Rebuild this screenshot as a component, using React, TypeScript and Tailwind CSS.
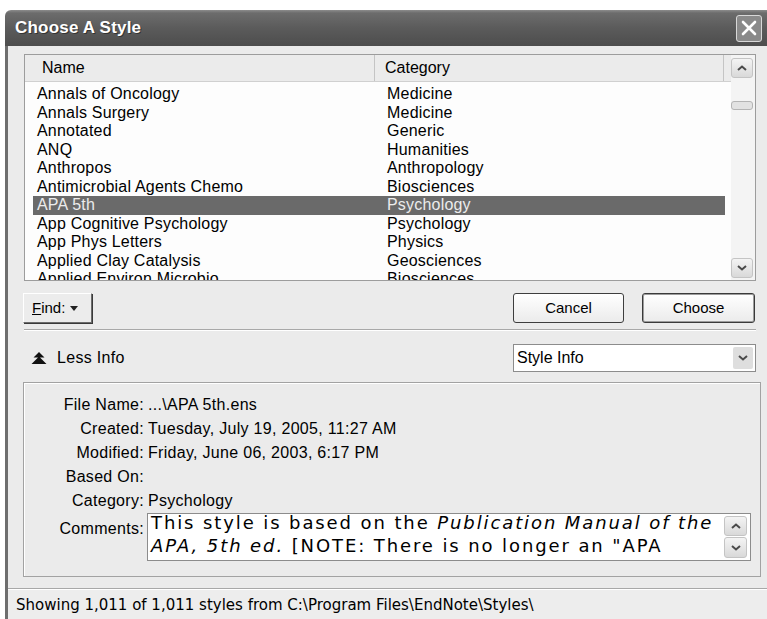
import React from 'react';

const styles: [string, string][] = [
	['Annals of Oncology', 'Medicine'],
	['Annals Surgery', 'Medicine'],
	['Annotated', 'Generic'],
	['ANQ', 'Humanities'],
	['Anthropos', 'Anthropology'],
	['Antimicrobial Agents Chemo', 'Biosciences'],
	['APA 5th', 'Psychology'],
	['App Cognitive Psychology', 'Psychology'],
	['App Phys Letters', 'Physics'],
	['Applied Clay Catalysis', 'Geosciences'],
	['Applied Environ Microbio', 'Biosciences'],
];

const selected = 'APA 5th';

const details: [string, string][] = [
	['File Name:', '...\\APA 5th.ens'],
	['Created:', 'Tuesday, July 19, 2005, 11:27 AM'],
	['Modified:', 'Friday, June 06, 2003, 6:17 PM'],
	['Based On:', ''],
	['Category:', 'Psychology'],
];

const Chevron = ({ up = false }: { up?: boolean }) => (
	<svg width="10" height="6" viewBox="0 0 10 6" className={up ? '' : 'rotate-180'}>
		<polyline points="1,5 5,1.5 9,5" fill="none" stroke="#4a4a4a" strokeWidth="2" />
	</svg>
);

const ScrollButton = ({ up = false, className = '' }: { up?: boolean; className?: string }) => (
	<div
		className={`flex items-center justify-center rounded-[3px] border border-[#c4c4c4] bg-[linear-gradient(to_bottom,#f4f4f4,#d9d9d9)] ${className}`}
	>
		<Chevron up={up} />
	</div>
);

const TitleBar = () => (
	<div className="flex h-[36px] items-center justify-between rounded-tl-[6px] bg-[linear-gradient(to_bottom,#8c8c8c_0px,#6c6c6c_3px,#5b5b5b_50%,#4d4d4d_100%)] pl-[10px] pr-[5px]">
		<span className="text-[17px] font-bold tracking-[0.2px] text-white [text-shadow:1px_1px_0_#333]">
			Choose A Style
		</span>
		<div className="flex h-[27px] w-[26px] items-center justify-center rounded-[3px] border border-[#d8d8d8] bg-[#8a8a8a]">
			<svg width="16" height="16" viewBox="0 0 16 16">
				<path d="M2 2 L14 14 M14 2 L2 14" stroke="#fff" strokeWidth="2.6" strokeLinecap="round" />
			</svg>
		</div>
	</div>
);

const StyleList = () => (
	<div className="mt-[8px] ml-[16px] flex h-[227px] w-[732px] border border-[#9c9c9c] bg-[#fdfdfd]">
		<div className="flex min-w-0 flex-1 flex-col overflow-hidden">
			<div className="flex h-[27px] shrink-0 items-center border-b border-[#d0d0d0] bg-[#ebebeb]">
				<div className="flex h-full w-[350px] items-center border-r border-[#c4c4c4] pl-[17px]">Name</div>
				<div className="flex h-full w-[349px] items-center border-r border-[#c4c4c4] pl-[10px]">Category</div>
			</div>
			<div className="pt-[3px]">
				{styles.map(([name, category]) => {
					const active = name === selected;
					return (
						<div
							key={name}
							className={`ml-[8px] mr-[6px] grid h-[18.5px] grid-cols-[350px_1fr] items-center leading-[18.5px] tracking-[0.2px] ${
								active ? 'bg-[#6a6a6a] text-[#ececec]' : 'text-black'
							}`}
						>
							<span className="pl-[4px] whitespace-nowrap">{name}</span>
							<span className="pl-[4px] whitespace-nowrap">{category}</span>
						</div>
					);
				})}
			</div>
		</div>
		<div className="flex w-[24px] flex-col bg-[#f4f4f4] pt-[3px] pb-[2px] pr-[2px]">
			<ScrollButton up className="h-[20px] w-[22px]" />
			<div className="mt-[23px] h-[9px] w-[22px] rounded-[3px] border border-[#b4b4b4] bg-[#e2e2e2]" />
			<div className="flex-1" />
			<ScrollButton className="h-[20px] w-[22px]" />
		</div>
	</div>
);

const ActionRow = () => (
	<div className="mt-[12px] flex h-[30px] items-center">
		<button className="ml-[15px] flex h-[30px] w-[69px] items-center gap-[5px] border border-t-white border-l-white border-b-[#6c6c6c] border-r-[#6c6c6c] bg-[#ececec] pl-[8px] text-[15px] shadow-[1px_1px_0_#3a3a3a]">
			<span>
				<span className="underline">F</span>ind:
			</span>
			<svg width="8" height="5" viewBox="0 0 8 5">
				<polygon points="0,0 8,0 4,5" fill="#222" />
			</svg>
		</button>
		<button className="ml-auto h-[30px] w-[111px] rounded-[3px] border border-[#3e3e3e] bg-[linear-gradient(to_bottom,#ffffff,#ebebeb)] text-[15px]">
			Cancel
		</button>
		<button className="mr-[12px] ml-[18px] h-[30px] w-[113px] rounded-[3px] border border-[#3a3a3a] bg-[linear-gradient(to_bottom,#ffffff,#ebebeb)] text-[15px] shadow-[inset_0_0_0_1px_#9c9c9c]">
			Choose
		</button>
	</div>
);

const InfoToggle = () => (
	<div className="mt-[13px] flex h-[28px] items-center">
		<svg width="16" height="13" viewBox="0 0 16 13" className="ml-[23px]">
			<path d="M8 0 L13.5 5.5 L2.5 5.5 Z M8 4.5 L15.5 12 L0.5 12 Z" fill="#111" />
		</svg>
		<span className="ml-[10px] tracking-[0.3px]">Less Info</span>
		<div className="mr-[11px] ml-auto flex h-[28px] w-[243px] items-center border border-[#8c8c8c] bg-white pr-[2px]">
			<span className="flex-1 pl-[3px]">Style Info</span>
			<div className="flex h-[22px] w-[20px] items-center justify-center rounded-[2px] bg-[#dedede]">
				<Chevron />
			</div>
		</div>
	</div>
);

const DetailPanel = () => (
	<div className="mt-[10px] ml-[15px] h-[195px] w-[738px] border border-[#a2a2a2] bg-[#ebebeb] pt-[10px] shadow-[inset_1px_1px_0_#ffffff]">
		{details.map(([label, value]) => (
			<div key={label} className="flex h-[24px] items-center tracking-[0.3px]">
				<span className="w-[120px] text-right">{label}</span>
				<span className="ml-[4px]">{value}</span>
			</div>
		))}
		<div className="flex">
			<span className="w-[120px] pt-[7px] text-right leading-[18px] tracking-[0.3px]">Comments:</span>
			<div className="ml-[3px] flex h-[48px] w-[604px] border border-[#8c8c8c] bg-white">
				<div className="-mt-[3px] flex-1 overflow-hidden whitespace-nowrap pl-[3px] font-['DejaVu_Sans',Verdana,sans-serif] text-[18px] leading-[23px] tracking-[1.9px]">
					<div>
						This style is based on the <i>Publication Manual of the</i>
					</div>
					<div>
						<i>APA, 5th ed.</i> [NOTE: There is no longer an "APA
					</div>
				</div>
				<div className="mr-[3px] flex flex-col gap-[1px] pt-[2px]">
					<ScrollButton up className="h-[20px] w-[23px]" />
					<ScrollButton className="h-[21px] w-[23px]" />
				</div>
			</div>
		</div>
	</div>
);

export default function App() {
	return (
		<div className="h-[619px] w-[767px] overflow-hidden bg-white pt-[10px] pl-[5px] font-['Liberation_Sans',Arial,sans-serif] text-[16px] text-black">
			<div className="flex h-[609px] flex-col">
				<TitleBar />
				<div className="flex flex-1 flex-col border-l-[3px] border-[#6e6e6e] bg-[#ebebeb]">
					<StyleList />
					<ActionRow />
					<div className="mt-[6px] ml-[16px] h-[2px] w-[732px] border-t border-b border-t-[#a8a8a8] border-b-white" />
					<InfoToggle />
					<DetailPanel />
					<div className="mt-[11px] h-[2px] border-t border-b border-t-[#a8a8a8] border-b-white" />
					<div className="flex flex-1 items-center bg-[#ededed] pt-[2px] pl-[8px] font-['DejaVu_Sans',Verdana,sans-serif] text-[15px]">
						Showing 1,011 of 1,011 styles from C:\Program Files\EndNote\Styles\
					</div>
				</div>
			</div>
		</div>
	);
}
